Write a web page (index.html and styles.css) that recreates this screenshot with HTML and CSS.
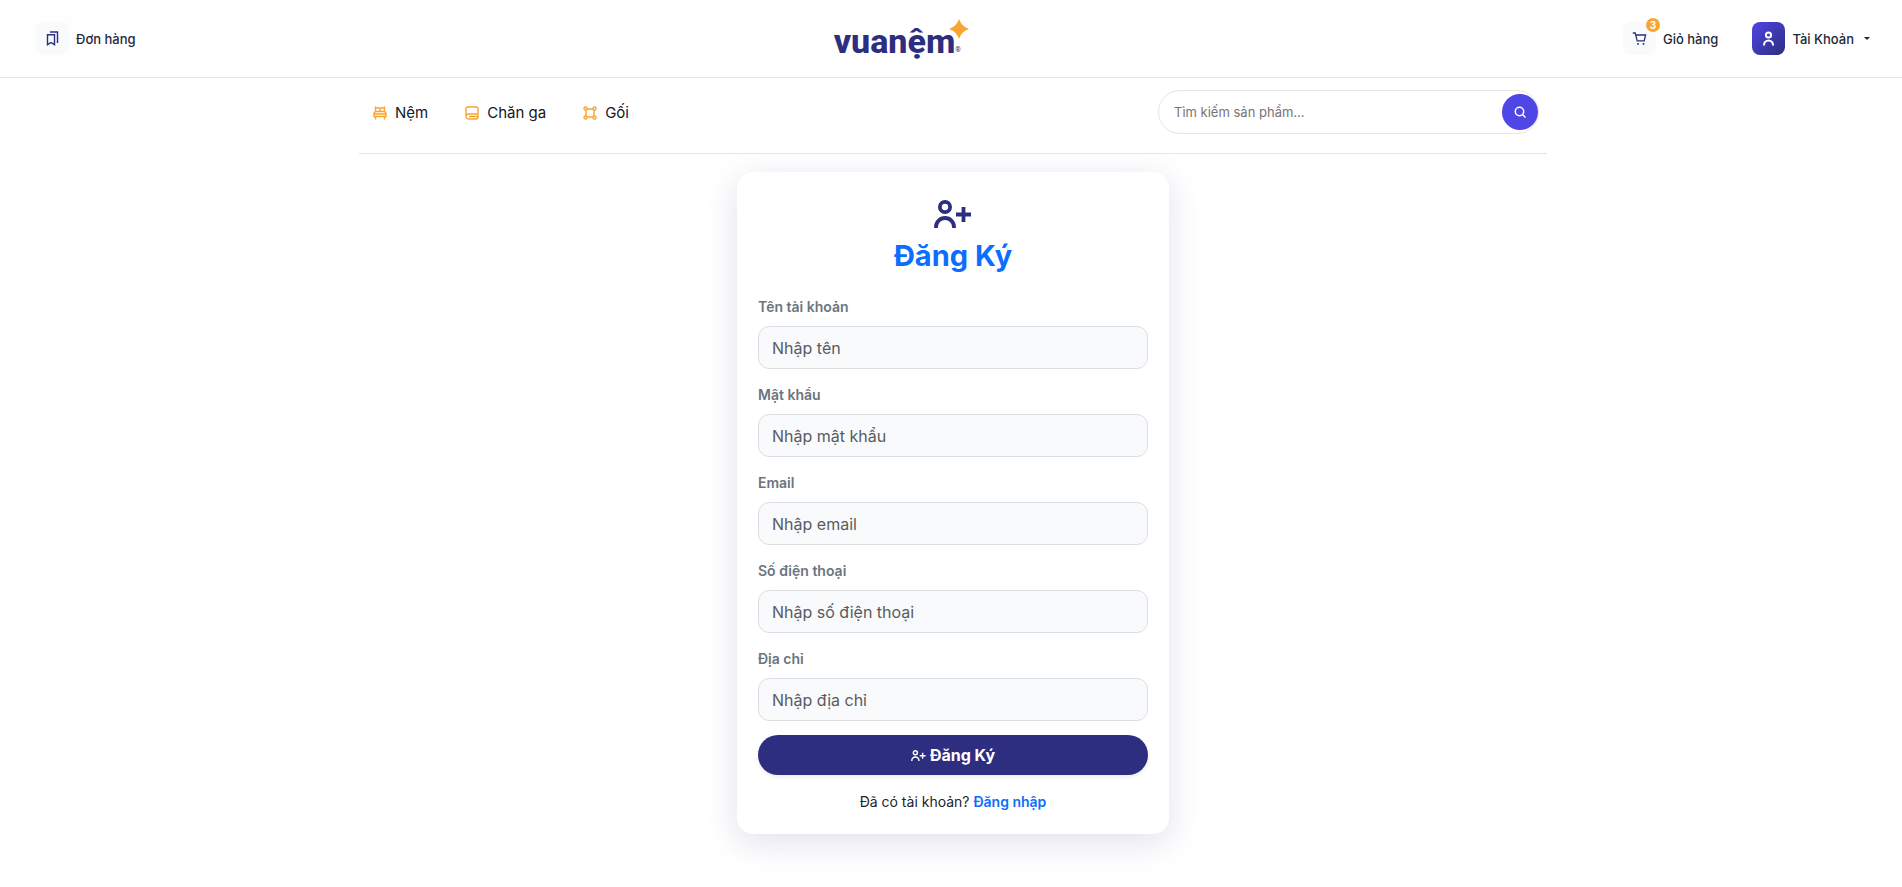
FILE: index.html
```html
<!DOCTYPE html>
<html lang="vi">
<head>
<meta charset="utf-8">
<meta name="viewport" content="width=device-width, initial-scale=1">
<title>Đăng Ký</title>
<link rel="stylesheet" href="styles.css">
</head>
<body>
<header class="topbar">
  <a class="action action-boxed" href="#orders">
    <span class="action-icon"><svg viewBox="0 0 15 15" fill="none" stroke="currentColor" stroke-width="1.400"><path d="M2.500 3.700h7v10L6 11.500l-3.500 2.200zM5 1h7.500v11"/></svg></span>
    <span>Đơn hàng</span>
  </a>
  <a class="logo" href="#home" aria-label="vuanệm">
    <span>vuanệm</span><small>®</small>
    <svg class="logo-star" viewBox="0 0 20 20"><path d="M10 0Q12.500 7.500 20 10Q12.500 12.500 10 20Q7.500 12.500 0 10Q7.500 7.500 10 0Z" fill="#f9a531"/></svg>
  </a>
  <div class="actions">
    <a class="action" href="#cart">
      <span class="action-icon"><svg viewBox="0 0 15 15" fill="none" stroke="currentColor" stroke-width="1.300"><path d="M.8 2h2.400l2 7.800h7L13.600 4H3.800"/><path d="M5.200 12.800h1.600M10.700 12.800h1.600" stroke-width="1.700"/></svg><span class="badge">3</span></span>
      <span>Giỏ hàng</span>
    </a>
    <button class="action" type="button">
      <span class="action-icon action-icon-user"><svg viewBox="-1 -1 24 30" fill="none" stroke="currentColor" stroke-width="4"><circle cx="11" cy="7" r="5.200"/><path d="M2 28v-1a9 9 0 0 1 18 0v1"/></svg></span>
      <span>Tài Khoản</span><span class="caret"></span>
    </button>
  </div>
</header>
<div class="content">
<nav class="nav">
  <div class="menu">
    <a href="#nem"><svg viewBox="0 0 14 14"><path d="M2.500 5.500V.5M11.500 5.500V.5M2.500 2h9M7 2v3.500M2.500 5.500h9L13 7v3.500H1V7zM1 8h12M2.500 10.500v3M11.500 10.500v3"/></svg>Nệm</a>
    <a href="#changa"><svg viewBox="0 0 14 14"><path d="M1 10.500V3q0-2 2-2h8q2 0 2 2v8q0 2-2 2H3.500Q1 13 1 10.500Q1 8 3.500 8H13M4 10.500h9"/></svg>Chăn ga</a>
    <a href="#goi"><svg viewBox="0 0 14 14"><path d="M4 3h6M4 11h6M3 4v6M11 4v6"/><circle cx="2.500" cy="2.500" r="1.500"/><circle cx="11.500" cy="2.500" r="1.500"/><circle cx="2.500" cy="11.500" r="1.500"/><circle cx="11.500" cy="11.500" r="1.500"/></svg>Gối</a>
  </div>
  <form class="search">
    <input type="search" placeholder="Tìm kiếm sản phẩm..." aria-label="Tìm kiếm sản phẩm">
    <button type="button" aria-label="Tìm kiếm"><svg viewBox="0 0 12 12" fill="none" stroke="currentColor" stroke-width="1.500"><circle cx="5.500" cy="5.500" r="4.200"/><path d="M8.500 8.500 11.500 11.500"/></svg></button>
  </form>
</nav>
<main class="main">
  <form class="card">
    <div class="card-head">
      <svg class="head-icon" viewBox="0 0 38 28" fill="none" stroke="currentColor" stroke-width="3.800"><circle cx="11" cy="7" r="5.100"/><path d="M2 28v-1a9 9 0 0 1 18 0v1M22 14.500h15M29.500 7v15"/></svg>
      <h1>Đăng Ký</h1>
    </div>
    <div class="fields">
      <div class="field"><label for="name">Tên tài khoản</label><input id="name" type="text" placeholder="Nhập tên"></div>
      <div class="field"><label for="pass">Mật khẩu</label><input id="pass" type="password" placeholder="Nhập mật khẩu"></div>
      <div class="field"><label for="email">Email</label><input id="email" type="email" placeholder="Nhập email"></div>
      <div class="field"><label for="phone">Số điện thoại</label><input id="phone" type="tel" placeholder="Nhập số điện thoại"></div>
      <div class="field"><label for="address">Địa chỉ</label><input id="address" type="text" placeholder="Nhập địa chỉ"></div>
    </div>
    <button class="submit" type="button"><svg viewBox="0 0 38 28" fill="none" stroke="currentColor" stroke-width="3.600"><circle cx="11" cy="7" r="5.200"/><path d="M2 28v-1a9 9 0 0 1 18 0v1M22 14.500h15M29.500 7v15"/></svg>Đăng Ký</button>
    <p class="login">Đã có tài khoản? <a href="#login">Đăng nhập</a></p>
  </form>
</main>
</div>
</body>
</html>
```
FILE: styles.css
```css
* { box-sizing: border-box; }
body { min-height: 100vh; margin: 0; background: #fff; color: #212529; font-family: Inter, "Noto Sans", sans-serif; font-size: 14px; line-height: 20px; }
a { color: inherit; text-decoration: none; }
button, input { font-family: inherit; }
.topbar { display: flex; align-items: center; justify-content: space-between; height: 78px; padding: 0 22px 0 26px; border-bottom: 1px solid #e5e5e5; }
.actions { display: flex; gap: 14px; }
.action { display: flex; align-items: center; gap: 7px; padding: 6px 10px; border: 0; border-radius: 12px; background: transparent; color: #1e293b; font-size: 13px; font-weight: 500; line-height: 20px; }
.action-boxed { background: #fefefe; }
.action-icon { position: relative; display: flex; align-items: center; justify-content: center; width: 33px; height: 33px; border-radius: 8px; background: #f8fafc; color: #2d2e7f; }
.action-icon svg { width: 15px; height: 15px; }
.action-icon-user { background: linear-gradient(135deg, #4f46e5, #2d2e7f); color: #fff; }
.badge { position: absolute; top: -4px; right: -4px; width: 14px; height: 14px; border-radius: 50%; background: #f9a531; color: #fff; font-size: 10px; font-weight: 700; line-height: 14px; text-align: center; }
.caret { margin-left: 3px; border: 3px solid transparent; border-top-color: currentColor; border-bottom: 0; }
.logo { position: relative; display: flex; align-items: flex-end; margin-left: 36px; padding-top: 4px; color: #2d2e7f; font-family: Roboto, sans-serif; font-size: 34px; font-weight: 800; line-height: 46px; }
.logo small { font-size: 7px; line-height: 28px; font-weight: 400; }
.logo-star { position: absolute; top: 5px; right: -8px; width: 20px; height: 20px; }
.content { padding-left: 4px; }
.nav { display: flex; justify-content: space-between; align-items: flex-start; width: 1188px; max-width: 100%; margin: 0 auto; padding: 12px 8px 19px 14px; border-bottom: 1px solid #e5e5e5; }
.menu { display: flex; gap: 37px; padding-top: 13px; }
.menu a { display: flex; align-items: center; gap: 8px; color: #0f172a; font-size: 15px; font-weight: 400; }
.menu svg { width: 14px; height: 14px; fill: none; stroke: #f9a531; stroke-width: 1.4; }
.search { display: flex; align-items: center; width: 381px; height: 44px; padding: 3px 0 3px 15px; border: 1px solid #e5e5e5; border-radius: 22px; }
.search input { flex: 1; min-width: 0; border: 0; padding: 0; outline: 0; background: transparent; font-size: 13px; }
.search button { display: flex; align-items: center; justify-content: center; width: 36px; height: 36px; padding: 0; border: 0; border-radius: 50%; background: #4f46e5; color: #fff; }
.search button svg { width: 12px; height: 12px; }
.main { display: flex; justify-content: center; padding: 18px 16px 52px; }
.card { width: 432px; padding: 28px 21px 21px; border-radius: 16px; background: #fff; box-shadow: 0 8px 32px rgba(45, 46, 127, .15); }
.card-head { display: flex; flex-direction: column; align-items: center; margin-bottom: 22px; color: #2d2e7f; }
.head-icon { width: 38px; height: 28px; }
h1 { margin: 10px 0 0; color: #0d6efd; font-size: 29px; font-weight: 700; line-height: 36px; }
.fields { display: grid; gap: 15px; margin-bottom: 14px; }
.field label { display: block; margin-bottom: 8px; color: #6c757d; font-size: 14px; font-weight: 600; line-height: 22px; }
.field input { display: block; width: 100%; height: 43px; padding: 0 13px; border: 1px solid #dcdfe2; border-radius: 11px; background: #f8fafc; font-size: 16px; }
.field input::placeholder { color: #595c5f; }
.submit { display: flex; align-items: center; justify-content: center; gap: 4px; width: 100%; height: 40px; padding: 0; border: 0; border-radius: 20px; background: #2d2e7f; box-shadow: 0 2px 4px rgba(0, 0, 0, .08); color: #fff; font-size: 16px; font-weight: 700; }
.submit svg { width: 15px; height: 11px; }
.login { margin: 16px 0 0; text-align: center; line-height: 22px; }
.login a { color: #0d6efd; font-weight: 600; }
```
